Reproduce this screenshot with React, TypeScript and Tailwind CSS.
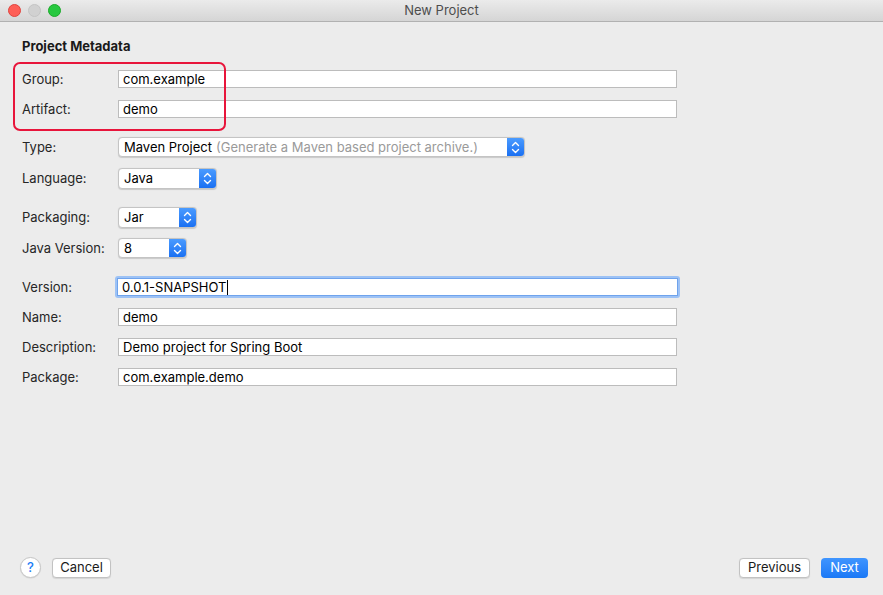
import React from "react";

const font = { fontFamily: "Inter, 'Noto Sans', 'Liberation Sans', sans-serif" };

function TextField({ value, focused = false }: { value: string; focused?: boolean }) {
  if (focused) {
    return (
      <div className="ml-[-3px] mr-[-3px] flex h-[22px] w-[565px] items-center rounded-[3px] bg-[#9dc2f5] p-[2px]">
        <div className="flex h-full w-full items-center border border-[#6fa3ec] bg-white px-[4px] text-[13px] leading-none text-black">
          {value}
          <span className="ml-px inline-block h-[15px] w-px bg-black" />
        </div>
      </div>
    );
  }
  return (
    <div className="flex h-[18px] w-[559px] items-center border border-[#bcbcbc] bg-white px-[4px] text-[13px] leading-none text-black">
      {value}
    </div>
  );
}

function Stepper() {
  return (
    <svg width="9" height="13" viewBox="0 0 9 13" fill="none" stroke="white" strokeWidth="1.4" strokeLinecap="round" strokeLinejoin="round">
      <path d="M1.5 4.5 L4.5 1.5 L7.5 4.5" />
      <path d="M1.5 8.5 L4.5 11.5 L7.5 8.5" />
    </svg>
  );
}

function Select({ width, height = 20, children }: { width: number; height?: number; children: React.ReactNode }) {
  return (
    <div
      className="flex overflow-hidden rounded-[4px] border border-[#c4c4c4] bg-white shadow-[0_0.5px_1px_rgba(0,0,0,0.15)]"
      style={{ width, height }}
    >
      <div className="flex flex-1 items-center whitespace-nowrap px-[5px] text-[13px] leading-none text-black">{children}</div>
      <div className="flex w-[17px] items-center justify-center bg-gradient-to-b from-[#4a9bff] to-[#1a70f2]">
        <Stepper />
      </div>
    </div>
  );
}

function Row({ label, children, className = "" }: { label: string; children: React.ReactNode; className?: string }) {
  return (
    <div className={"flex items-center " + className}>
      <div className="w-[96px] text-[13px] leading-none text-[#262626]">{label}</div>
      {children}
    </div>
  );
}

export default function App() {
  return (
    <div className="flex h-[595px] w-[883px] flex-col overflow-hidden bg-[#ececec]" style={font}>
      {/* title bar */}
      <div className="relative flex h-[22px] shrink-0 items-center justify-center border-b border-[#b1b1b1] bg-gradient-to-b from-[#ebebeb] to-[#d5d5d5]">
        <div className="absolute left-[8px] top-[4px] flex gap-[7px]">
          <span className="h-[13px] w-[13px] rounded-full border border-[#e0443e] bg-[#fe5f57]" />
          <span className="h-[13px] w-[13px] rounded-full border border-[#c4c4c4] bg-[#d1d1d1]" />
          <span className="h-[13px] w-[13px] rounded-full border border-[#1aab29] bg-[#28c840]" />
        </div>
        <span className="text-[13px] text-[#4d4d4d]">New Project</span>
      </div>

      {/* form */}
      <div className="relative flex flex-1 flex-col pl-[22px] pt-[16px]">
        <div className="h-[16px] text-[13px] font-bold leading-[16px] text-[#1a1a1a]">Project Metadata</div>

        <Row label="Group:" className="mt-[16px]">
          <TextField value="com.example" />
        </Row>
        <Row label="Artifact:" className="mt-[12px]">
          <TextField value="demo" />
        </Row>

        <Row label="Type:" className="mt-[19px]">
          <Select width={407}>
            Maven Project<span className="ml-[4px] text-[#9a9a9a]">(Generate a Maven based project archive.)</span>
          </Select>
        </Row>
        <Row label="Language:" className="mt-[11px]">
          <Select width={99} height={21}>Java</Select>
        </Row>

        <Row label="Packaging:" className="mt-[18px]">
          <Select width={79} height={21}>Jar</Select>
        </Row>
        <Row label="Java Version:" className="mt-[10px]">
          <Select width={69}>8</Select>
        </Row>

        <Row label="Version:" className="mt-[18px]">
          <TextField value="0.0.1-SNAPSHOT" focused />
        </Row>
        <Row label="Name:" className="mt-[10px]">
          <TextField value="demo" />
        </Row>
        <Row label="Description:" className="mt-[12px]">
          <TextField value="Demo project for Spring Boot" />
        </Row>
        <Row label="Package:" className="mt-[12px]">
          <TextField value="com.example.demo" />
        </Row>

        {/* annotation box drawn over the form */}
        <div className="pointer-events-none absolute left-[13px] top-[40px] h-[69px] w-[213px] rounded-[7px] border-[2.5px] border-[#e8153b]" />
      </div>

      {/* footer */}
      <div className="flex shrink-0 items-center justify-between pb-[17px] pl-[20px] pr-[15px]">
        <div className="flex items-center gap-[11px]">
          <div className="flex h-[21px] w-[21px] items-center justify-center rounded-full border border-[#c6c6c6] bg-white text-[13px] font-medium text-[#1a7cf5] shadow-[0_0.5px_1px_rgba(0,0,0,0.1)]">
            ?
          </div>
          <button className="h-[20px] w-[59px] rounded-[4px] border border-[#c2c2c2] bg-white text-[13px] leading-none text-[#1a1a1a] shadow-[0_0.5px_1px_rgba(0,0,0,0.1)]">
            Cancel
          </button>
        </div>
        <div className="flex items-center gap-[11px]">
          <button className="h-[20px] w-[71px] rounded-[4px] border border-[#c2c2c2] bg-white text-[13px] leading-none text-[#1a1a1a] shadow-[0_0.5px_1px_rgba(0,0,0,0.1)]">
            Previous
          </button>
          <button className="h-[20px] w-[47px] rounded-[4px] bg-gradient-to-b from-[#3f95ff] to-[#1a78f6] text-[13px] leading-none text-white">
            Next
          </button>
        </div>
      </div>
    </div>
  );
}
